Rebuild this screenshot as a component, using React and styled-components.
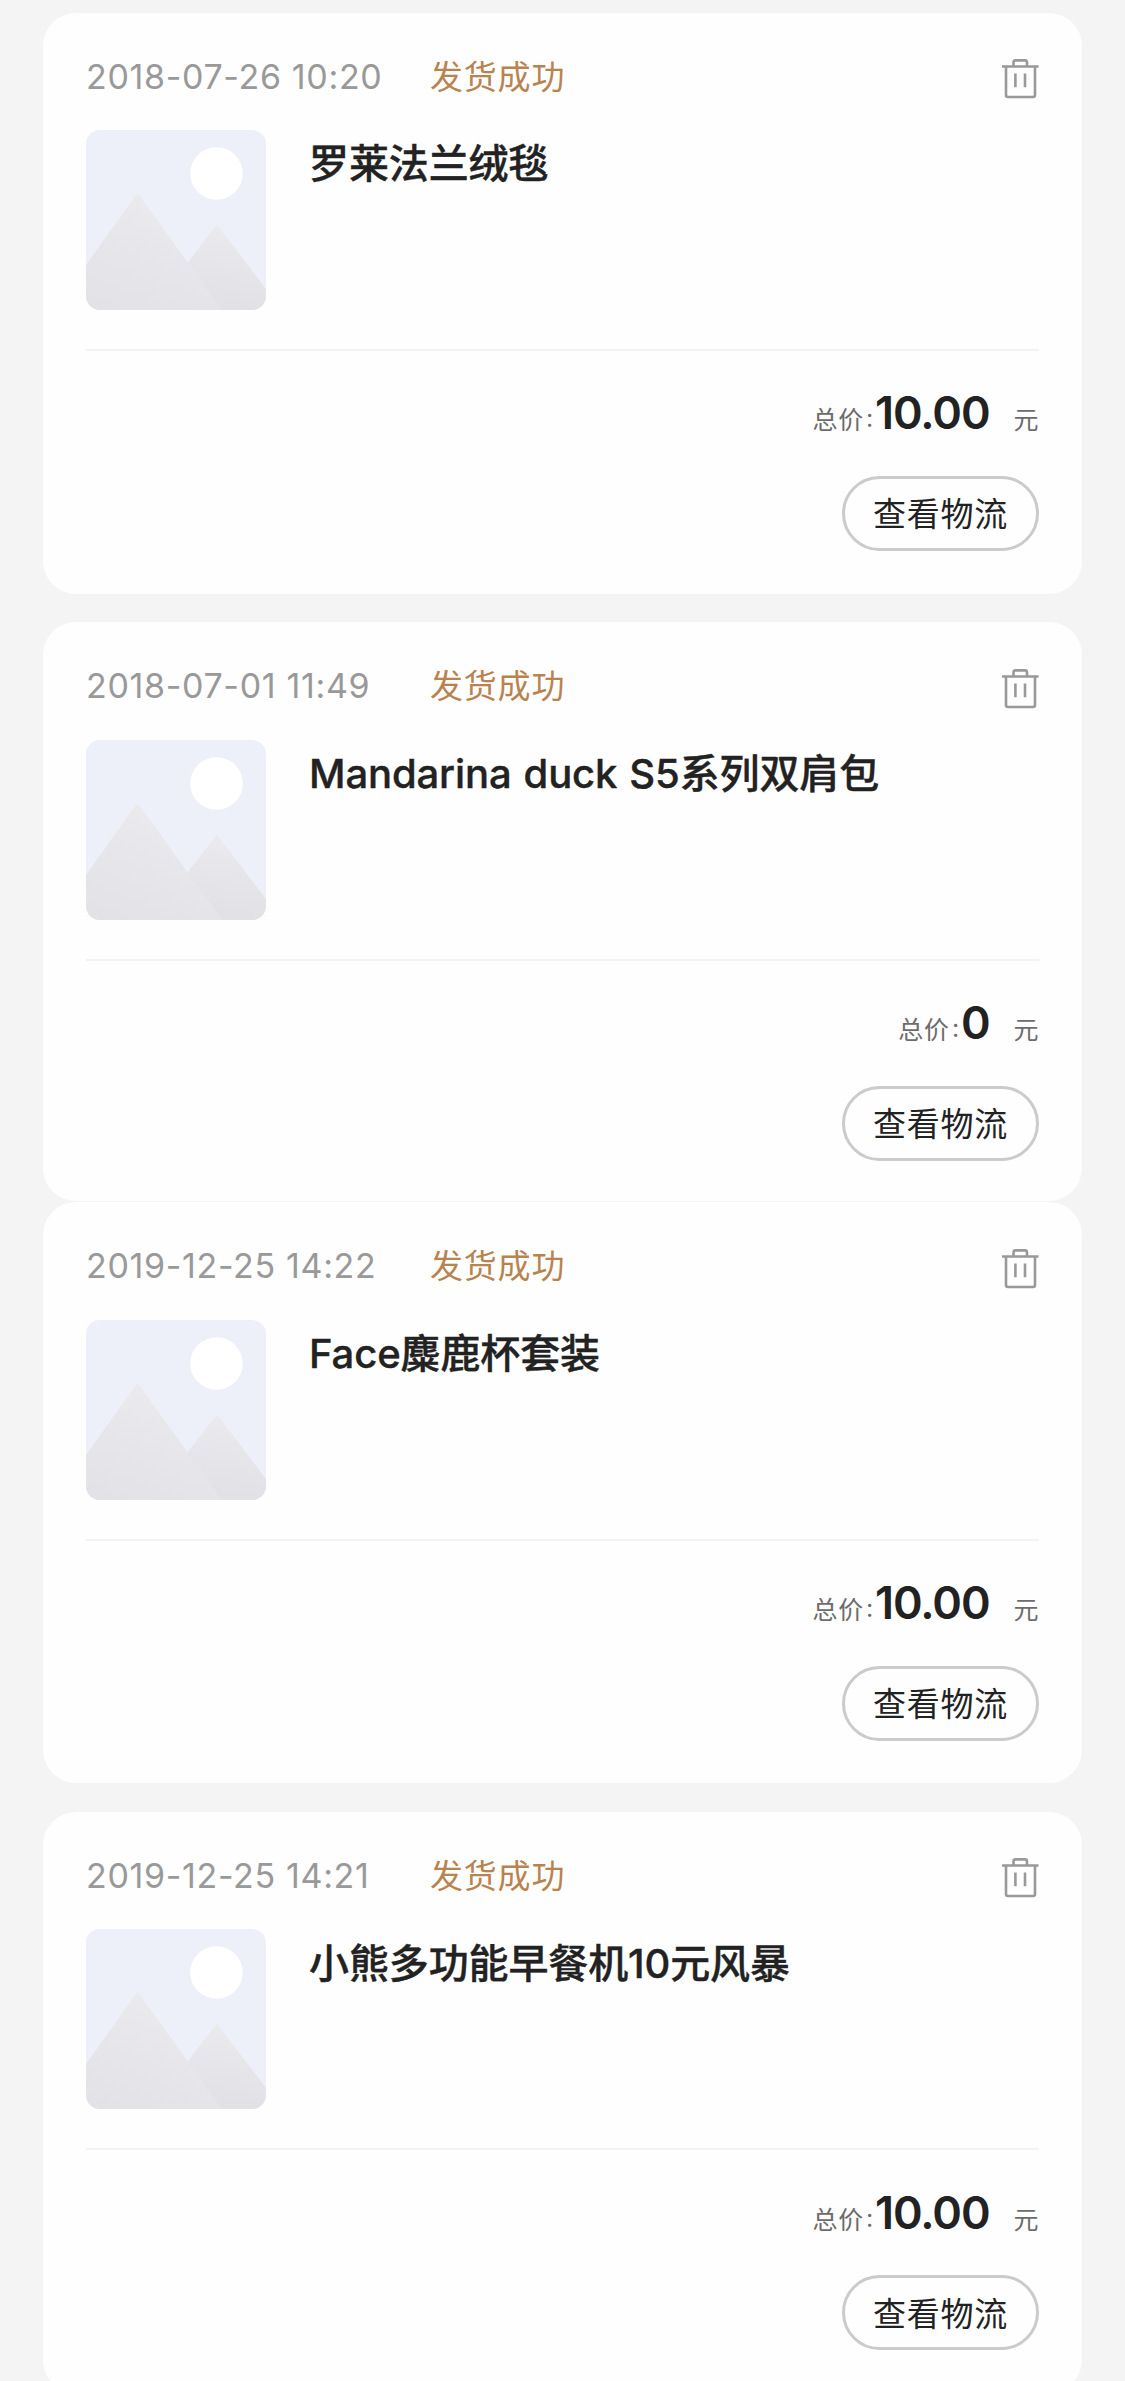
import React from "react";
import styled, { createGlobalStyle } from "styled-components";

const GlobalStyle = createGlobalStyle`
  * {
    box-sizing: border-box;
  }
  body {
    margin: 0;
    background: #f4f4f4;
    font-family: Inter, "Noto Sans CJK SC", sans-serif;
    color: #222;
  }
`;

const Page = styled.main`
  height: 2381px;
  padding: 12.6px 43px 0;
  overflow: hidden;
`;

const Card = styled.article`
  height: ${(p) => (p.$joined ? 578.5 : 581)}px;
  margin-bottom: ${(p) => (p.$joined ? 1.5 : 28.7)}px;
  padding: 42px 43px 0;
  border-radius: 33px;
  background: #fefefe;
`;

const CardHeader = styled.header`
  display: flex;
  align-items: flex-start;
  height: 44px;
`;

const OrderTime = styled.time`
  width: 344px;
  color: #999;
  font-size: 34px;
  line-height: 44px;
  white-space: nowrap;
  letter-spacing: 0.66px;
`;

const Status = styled.span`
  color: #b9834f;
  font-size: 33px;
  line-height: 44px;
  letter-spacing: 0.8px;
`;

const DeleteButton = styled.button`
  display: flex;
  margin: 4.5px 0 0 auto;
  padding: 0;
  border: 0;
  background: none;
  color: #999;
`;

const Product = styled.div`
  display: flex;
  gap: 43px;
  height: 250.4px;
  padding-top: 31.4px;
`;

const Thumbnail = styled.div`
  flex: none;
  width: 180px;
  height: 180px;
  border-radius: 14px;
  overflow: hidden;

  svg {
    display: block;
  }
`;

const ProductName = styled.h2`
  margin: 8.4px 0 0;
  font-size: 40px;
  font-weight: 500;
  line-height: 52px;
  white-space: nowrap;
  letter-spacing: -0.12px;
  word-spacing: 1.5px;
  -webkit-text-stroke: 0.4px currentColor;
`;

const CardFooter = styled.footer`
  display: flex;
  flex-direction: column;
  align-items: flex-end;
  border-top: 2px solid #f3f3f3;
`;

const Total = styled.div`
  display: flex;
  align-items: baseline;
  height: 56px;
  margin-top: 34.4px;
  padding-right: 0.5px;
  color: #6c6c6c;
  font-size: 25px;
  line-height: 56px;
`;

const TotalLabel = styled.span`
  letter-spacing: 0.8px;
`;

const Colon = styled.span`
  margin: 0 1px 0 2px;
  line-height: 1;
  vertical-align: 2px;
`;

const Amount = styled.strong`
  margin-right: 24px;
  color: #222;
  font-size: 45px;
  font-weight: 600;
  letter-spacing: -1.1px;
`;

const LogisticsButton = styled.button`
  width: 197px;
  height: 75px;
  margin-top: 34.6px;
  padding: 0 0 2.5px;
  border: 3px solid #cbcbcb;
  border-radius: 38px;
  background: none;
  color: #222;
  font-family: inherit;
  font-size: 33px;
  letter-spacing: 0.8px;
`;

function TrashIcon() {
  return (
    <svg width="37" height="40" viewBox="0 0 37 40" fill="none" stroke="currentColor" strokeWidth="2.6">
      <path d="M0 7.5H36.5" />
      <path d="M11.5 7V3.5Q11.5 1.4 13.6 1.4H23Q25 1.4 25 3.5V7" />
      <path d="M4 8V36Q4 38 6 38H31Q33 38 33 36V8" />
      <path d="M13.4 14.5V28.2M23 14.5V28.2" />
    </svg>
  );
}

function PlaceholderImage({ id }) {
  return (
    <svg width="180" height="180" viewBox="0 0 180 180">
      <defs>
        <linearGradient id={`front-${id}`} gradientUnits="userSpaceOnUse" x1="70" y1="64" x2="30" y2="180">
          <stop offset="0" stopColor="#ebebee" />
          <stop offset="1" stopColor="#e2e2e7" />
        </linearGradient>
        <linearGradient id={`back-${id}`} gradientUnits="userSpaceOnUse" x1="136" y1="94" x2="126" y2="172">
          <stop offset="0" stopColor="#ebebee" />
          <stop offset="1" stopColor="#e1e1e6" />
        </linearGradient>
      </defs>
      <rect width="180" height="180" fill="#edf0f9" />
      <circle cx="130.5" cy="43.5" r="26.3" fill="#fff" />
      <path d="M131 94.5L180 159V180H80L101 133Z" fill={`url(#back-${id})`} />
      <path d="M51.5 64Q52.5 64 53.5 65.5L136 180H0V135L49.5 65.5Q50.5 64 51.5 64Z" fill={`url(#front-${id})`} />
    </svg>
  );
}

const orders = [
  { time: "2018-07-26 10:20", name: "罗莱法兰绒毯", total: "10.00" },
  { time: "2018-07-01 11:49", name: "Mandarina duck S5系列双肩包", total: "0", joined: true },
  { time: "2019-12-25 14:22", name: "Face麋鹿杯套装", total: "10.00" },
  { time: "2019-12-25 14:21", name: "小熊多功能早餐机10元风暴", total: "10.00" },
];

export default function App() {
  return (
    <>
      <GlobalStyle />
      <Page>
        {orders.map((order, index) => (
          <Card key={order.time} $joined={order.joined}>
            <CardHeader>
              <OrderTime>{order.time}</OrderTime>
              <Status>发货成功</Status>
              <DeleteButton aria-label="删除">
                <TrashIcon />
              </DeleteButton>
            </CardHeader>
            <Product>
              <Thumbnail>
                <PlaceholderImage id={index} />
              </Thumbnail>
              <ProductName>{order.name}</ProductName>
            </Product>
            <CardFooter>
              <Total>
                <TotalLabel>
                  总价<Colon>:</Colon>
                </TotalLabel>
                <Amount>{order.total}</Amount>
                <span>元</span>
              </Total>
              <LogisticsButton>查看物流</LogisticsButton>
            </CardFooter>
          </Card>
        ))}
      </Page>
    </>
  );
}
